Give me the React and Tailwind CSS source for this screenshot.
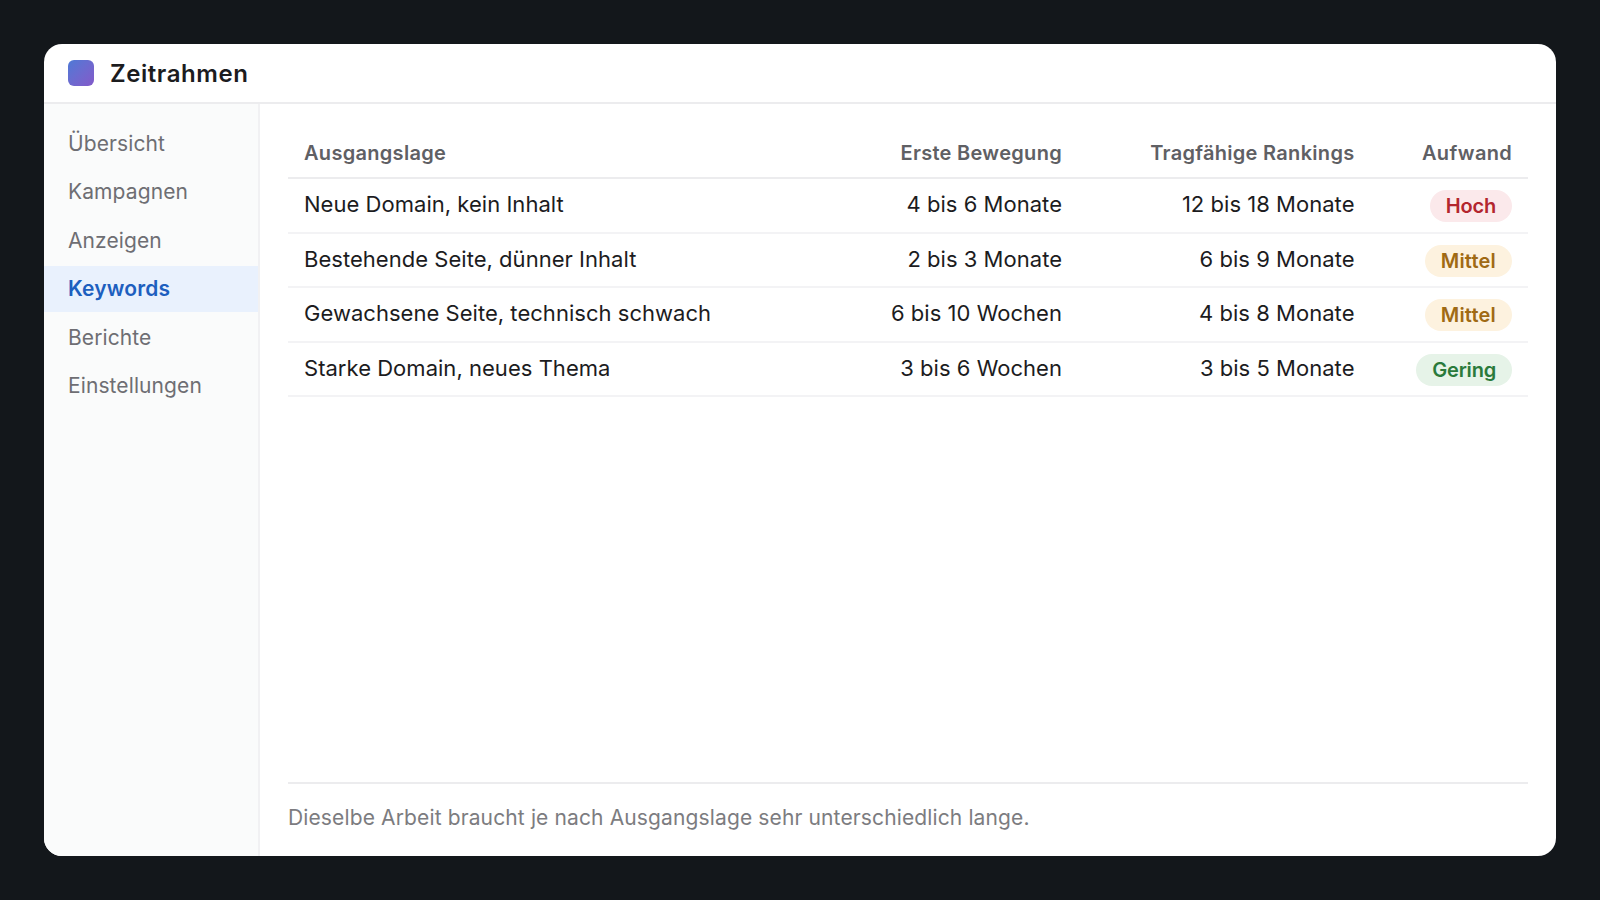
const nav = ["Übersicht", "Kampagnen", "Anzeigen", "Keywords", "Berichte", "Einstellungen"];
const rows = [
  ["Neue Domain, kein Inhalt", "4 bis 6 Monate", "12 bis 18 Monate", "Hoch", "bg-[#fbe9eb] tracking-[-0.2px] text-[#b3262e]"],
  ["Bestehende Seite, dünner Inhalt", "2 bis 3 Monate", "6 bis 9 Monate", "Mittel", "bg-[#fdf2df] tracking-[0.2px] text-[#a06a14]"],
  ["Gewachsene Seite, technisch schwach", "6 bis 10 Wochen", "4 bis 8 Monate", "Mittel", "bg-[#fdf2df] tracking-[0.2px] text-[#a06a14]"],
  ["Starke Domain, neues Thema", "3 bis 6 Wochen", "3 bis 5 Monate", "Gering", "bg-[#e6f3e8] tracking-[-0.2px] text-[#2a7a3b]"],
];

export default function App() {
  return (
    <div className="h-[900px] w-full bg-[#13171b] p-[44px] font-['Inter',sans-serif]">
      <div className="flex h-[812px] w-full flex-col overflow-hidden rounded-[18px] bg-white">
        <header className="flex h-[60px] shrink-0 items-center gap-4 border-b-2 border-[#ececee] px-6">
          <div className="h-[26px] w-[26px] rounded-[6px] bg-gradient-to-br from-[#4c79d6] to-[#8259c9]" />
          <h1 className="pt-[2px] text-[24px] font-semibold tracking-[0.55px] text-[#1c1c1e]">Zeitrahmen</h1>
        </header>
        <div className="flex min-h-0 flex-1">
          <aside className="w-[216px] shrink-0 border-r-2 border-[#f1f1f3] bg-[#fafbfb] pt-4">
            {nav.map((n) => (
              <div
                key={n}
                className={
                  n === "Keywords"
                    ? "mb-[2.5px] flex h-[46px] items-center bg-[#e9f1fd] px-6 pt-[1px] text-[21px] font-semibold tracking-[0.15px] text-[#1d5fbf]"
                    : "mb-[2.5px] flex h-[46px] items-center px-6 pt-[1px] text-[21px] tracking-[0.1px] text-[#6e6e73]"
                }
              >
                {n}
              </div>
            ))}
          </aside>
          <main className="flex min-w-0 flex-1 flex-col px-7">
            <table className="mt-[18px] w-full table-fixed border-collapse text-[22px] tracking-[0.03px] text-[#1c1c1e]">
              <thead>
                <tr className="h-[56px] border-b-2 border-[#ececee] text-[20px] font-semibold tracking-[0.3px] text-[#5f6064]">
                  <th className="w-[529px] px-4 pt-[6px] text-left font-semibold">Ausgangslage</th>
                  <th className="w-[261px] px-4 pt-[6px] text-right font-semibold">Erste Bewegung</th>
                  <th className="w-[292.5px] px-4 pt-[6px] text-right font-semibold">Tragfähige Rankings</th>
                  <th className="w-[157.5px] px-4 pt-[6px] text-right font-semibold">Aufwand</th>
                </tr>
              </thead>
              <tbody>
                {rows.map((r) => (
                  <tr key={r[0]} className="h-[54.5px] border-b-2 border-[#f3f3f5]">
                    <td className="px-4 pb-[1px]">{r[0]}</td>
                    <td className="px-4 pb-[1px] text-right">{r[1]}</td>
                    <td className="px-4 pb-[1px] text-right">{r[2]}</td>
                    <td className="px-4 text-right">
                      <span className={"inline-block rounded-full px-4 py-[3px] align-middle text-[20px] leading-[26px] font-semibold " + r[4]}>{r[3]}</span>
                    </td>
                  </tr>
                ))}
              </tbody>
            </table>
            <footer className="mt-auto flex h-[74px] items-center border-t-2 border-[#ececee] pb-[4px] text-[21px] tracking-[0.13px] text-[#7c7c80]">
              Dieselbe Arbeit braucht je nach Ausgangslage sehr unterschiedlich lange.
            </footer>
          </main>
        </div>
      </div>
    </div>
  );
}
